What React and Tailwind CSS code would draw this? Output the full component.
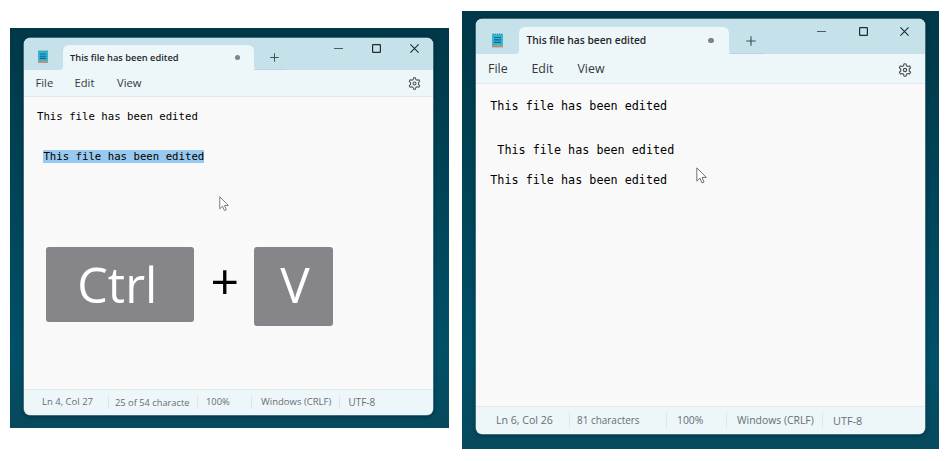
import clsx from "clsx";

function NotepadIcon({ className }) {
  return (
    <svg viewBox="0 0 10 13" className={className}>
      <rect x="0" y="1" width="10" height="10.6" fill="#35b4d6" />
      <rect x="0" y="11.4" width="10" height="1.6" fill="#c98a5e" />
      <path d="M1 .3v1.4M3 .3v1.4M5 .3v1.4M7 .3v1.4M9 .3v1.4" stroke="#2b7f9c" strokeWidth=".8" />
      <path d="M1.8 4h6.4M1.8 6.2h6.4M1.8 8.4h6.4" stroke="#0f6687" strokeWidth="1.1" />
    </svg>
  );
}

function Gear({ className }) {
  return (
    <svg viewBox="0 0 24 24" className={className} fill="none" stroke="#4a5053" strokeWidth="1.9" strokeLinejoin="round">
      <path d="M9.6 4.6 10.2 1.6Q12 1.1 13.8 1.6L14.4 4.6 16.9 6 19.8 5Q21.1 6.4 21.6 8.2L19.3 10.3V13.7L21.6 15.8Q21.1 17.6 19.8 19L16.9 18 14.4 19.4 13.8 22.4Q12 22.9 10.2 22.4L9.6 19.4 7.1 18 4.2 19Q2.9 17.6 2.4 15.8L4.7 13.7V10.3L2.4 8.2Q2.9 6.4 4.2 5L7.1 6Z" />
      <circle cx="12" cy="12" r="2.8" />
    </svg>
  );
}

function Pointer({ className }) {
  return (
    <svg viewBox="0 0 10 16" className={className}>
      <path d="M.6.8v12.4l2.9-2.7 1.9 4.5 2-.8-1.9-4.4h4Z" fill="#fff" stroke="#6b6b6b" strokeWidth=".9" strokeLinejoin="round" />
    </svg>
  );
}

function PlusIcon({ className }) {
  return (
    <svg viewBox="0 0 9 9" className={className} fill="none" stroke="#3f4f55" strokeWidth="1">
      <path d="M4.5 .3v8.4M.3 4.5h8.4" />
    </svg>
  );
}

function WindowButtons({ className }) {
  return (
    <div className={clsx("flex", className)}>
      <svg viewBox="0 0 9 9" className="size-[9px]" fill="none" stroke="#4d5c62">
        <path d="M0 4.5h9" />
      </svg>
      <svg viewBox="0 0 9 9" className="size-[9px]" fill="none" stroke="#222b2e" strokeWidth="1.2">
        <rect x=".6" y=".6" width="7.8" height="7.8" rx=".5" />
      </svg>
      <svg viewBox="0 0 9 9" className="size-[9px]" fill="none" stroke="#222b2e" strokeWidth="1.1">
        <path d="M.4.4l8.2 8.2M8.6.4.4 8.6" />
      </svg>
    </div>
  );
}

function Notepad({ s, status, children }) {
  return (
    <div className={clsx("flex flex-col overflow-hidden rounded-[6px] bg-[#edf6f9] shadow-[0_0_0_0.5px_#7fa3ad,0_1px_4px_rgba(0,20,28,0.6)]", s.window)}>
      <div className={clsx("flex shrink-0", s.titleBar)}>
        <div className={clsx("rounded-br-[4px] bg-[#c5e2eb]", s.iconCell)}>
          <NotepadIcon className={s.icon} />
        </div>
        <div className={clsx("bg-[#c5e2eb]", s.tabWrap)}>
          <div className="flex h-full items-center justify-between rounded-t-[6px] bg-[#edf6f9]">
            <span className={clsx("font-semibold whitespace-nowrap text-[#1f2628]", s.tabText)}>This file has been edited</span>
            <span className={clsx("rounded-full bg-[#7f8487]", s.dot)} />
          </div>
        </div>
        <div className="flex flex-1 justify-between rounded-bl-[4px] bg-[#c5e2eb]">
          <div className={clsx("border-b border-[#b7d8e2]", s.plusCell)}>
            <PlusIcon className={s.plus} />
          </div>
          <WindowButtons className={s.buttons} />
        </div>
      </div>
      <div className={clsx("flex shrink-0 items-center border-b border-[#dfeaee] text-[#33393b]", s.menu)}>
        <span className={s.file}>File</span>
        <span className={s.edit}>Edit</span>
        <span className="flex-1">View</span>
        <Gear className={s.gear} />
      </div>
      <div className={clsx("min-h-0 flex-1 bg-[#f9f9f9] font-['DejaVu_Sans_Mono',monospace] text-black", s.body)}>
        {children}
      </div>
      <div className={clsx("flex shrink-0 items-center border-t border-[#e1ebee] whitespace-nowrap text-[#666e71]", s.status)}>
        {status.map((text, i) => (
          <div key={text} className={clsx("flex items-center", i > 0 && "border-l border-[#dde6e9]", s.cells[i])}>
            <span className={s.texts[i]}>{text}</span>
          </div>
        ))}
      </div>
    </div>
  );
}

const small = {
  window: "h-[377px] w-[408.5px]",
  titleBar: "h-[32.5px]",
  iconCell: "w-[39px] pt-[12.5px] pl-[14px]",
  icon: "h-[13px] w-[10px]",
  tabWrap: "w-[191px] pt-[7.5px]",
  tabText: "pl-[7px] text-[9.31px]",
  dot: "mr-[14.5px] size-[5px]",
  plusCell: "w-[32px] pt-[15.5px] pl-[15.5px]",
  plus: "size-[9px]",
  buttons: "gap-[29px] pt-[6.5px] pr-[14px]",
  menu: "h-[27px] pl-[11.5px] text-[11.2px]",
  file: "w-[39px]",
  edit: "w-[42.5px]",
  gear: "mr-[12px] size-[13px]",
  body: "pt-[13px] pl-[13px] text-[10.69px] leading-[13.3px]",
  status: "h-[26px] pt-[1px] text-[9.5px]",
  cells: ["h-[13px] w-[84px] pl-[18px]", "h-[13px] w-[89px] pl-[6px]", "h-[13px] w-[54px] pl-[8px]", "h-[13px] w-[88px] pl-[9px]", "h-[13px] pl-[8.5px]"],
  texts: ["", "text-[9.3px]", "text-[9.4px]", "", "text-[9.9px]"],
};

const large = {
  window: "h-[415px] w-[449.5px]",
  titleBar: "h-[35px]",
  iconCell: "w-[43px] pt-[14px] pl-[16px]",
  icon: "h-[14.5px] w-[11px]",
  tabWrap: "w-[210.5px] pt-[8px]",
  tabText: "pl-[7.5px] text-[10.26px]",
  dot: "mr-[15.5px] size-[5.5px]",
  plusCell: "w-[36px] pt-[17px] pl-[17px]",
  plus: "size-[10px]",
  buttons: "gap-[32.5px] pt-[7.5px] pr-[16px]",
  menu: "h-[29.5px] pt-[2.5px] pl-[12px] text-[12.4px]",
  file: "w-[43.5px]",
  edit: "w-[46px]",
  gear: "mr-[13.5px] size-[14px]",
  body: "pt-[15.5px] pl-[14.3px] text-[11.76px] leading-[14.75px]",
  status: "h-[28.5px] pt-[1px] text-[10.4px]",
  cells: ["h-[15px] w-[93px] pl-[20px]", "h-[15px] w-[97px] pl-[7px]", "h-[15px] w-[60px] pl-[10px]", "h-[15px] w-[96px] pl-[10px]", "h-[15px] pl-[10px]"],
  texts: ["text-[10.6px]", "text-[9.95px]", "", "", "text-[10.9px]"],
};

export default function App() {
  return (
    <div className="flex h-[461px] w-[950px] items-start overflow-hidden bg-white pl-[10px] font-['Open_Sans','Noto_Sans',sans-serif]">
      <div className="relative mt-[28px] h-[400px] w-[439.4px] shrink-0 bg-linear-to-b from-[#003848] via-[#005068] via-80% to-[#07495c] pt-[9.5px] pl-[14px]">
        <Notepad s={small} status={["Ln 4, Col 27", "25 of 54 characte", "100%", "Windows (CRLF)", "UTF-8"]}>
          <p>This file has been edited</p>
          <p className="mt-[26.6px] ml-[6.4px] w-fit bg-[#99c9ef]">This file has been edited</p>
          <div className="mt-[84px] ml-[9px] flex items-start font-['Open_Sans','Noto_Sans',sans-serif] text-white">
            <div className="flex h-[75px] w-[147.5px] items-center justify-center rounded-[3px] bg-[#85858a] pr-[5px] pb-[1px] text-[48.5px] leading-none font-normal">Ctrl</div>
            <div className="flex h-[68px] w-[60.5px] items-center justify-center pl-[2px] text-[50px] leading-none font-normal text-black">+</div>
            <div className="flex h-[78.5px] w-[79px] items-center justify-center rounded-[3px] bg-[#85858a] pb-[3px] pl-[3px] text-[49.5px] leading-none font-normal">V</div>
          </div>
        </Notepad>
        <Pointer className="absolute top-[167.5px] left-[209px] h-[15.5px] w-[10px]" />
      </div>
      <div className="relative mt-[10.5px] ml-[12.6px] h-[438px] w-[477.4px] shrink-0 bg-linear-to-b from-[#003848] via-[#005068] via-80% to-[#07495c] pt-[8.5px] pl-[14px]">
        <Notepad s={large} status={["Ln 6, Col 26", "81 characters", "100%", "Windows (CRLF)", "UTF-8"]}>
          <div className="whitespace-pre">{"This file has been edited\n\n\n This file has been edited\n\nThis file has been edited"}</div>
        </Notepad>
        <Pointer className="absolute top-[156.5px] left-[234.5px] h-[17px] w-[11px]" />
      </div>
    </div>
  );
}
